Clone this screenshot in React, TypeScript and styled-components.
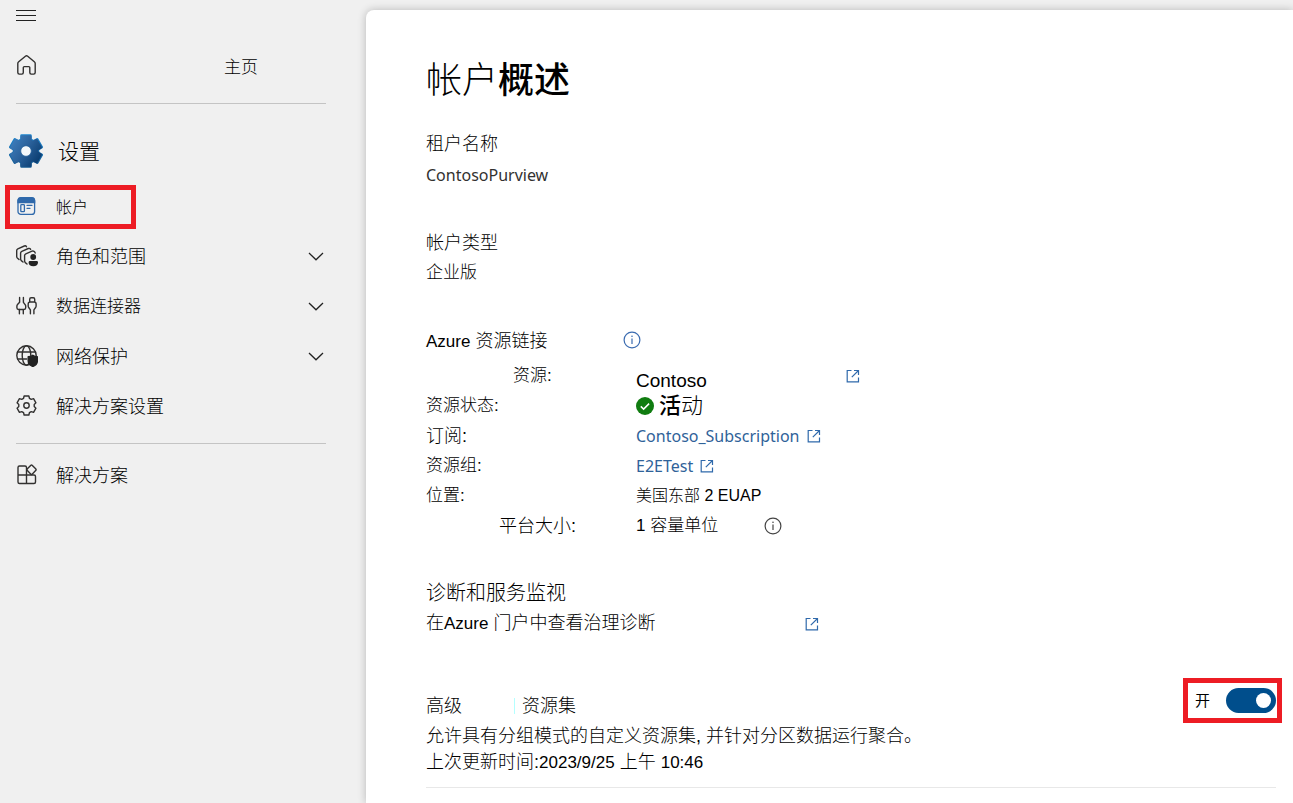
import React from "react";
import styled, { createGlobalStyle } from "styled-components";

const sans = `"Liberation Sans", "Noto Sans CJK SC", sans-serif`;
const humanist = `"Noto Sans", "Noto Sans CJK SC", sans-serif`;

const GlobalStyle = createGlobalStyle`
  * { box-sizing: border-box; }
  body {
    margin: 0;
    background: #f0f0f0;
    color: #000;
    font-family: ${sans};
    font-size: 18px;
    line-height: 30px;
    overflow-x: hidden;
  }
  h1, h2, p, dl, dd, dt, ul { margin: 0; padding: 0; font-weight: 300; }
  svg { display: block; flex: none; }
`;

const Shell = styled.div`
  display: grid;
  grid-template-columns: 366px minmax(0, 1fr);
  min-height: 100vh;
`;

const Sidebar = styled.nav`
  padding: 0 40px 0 16px;
  font-weight: 300;
`;

const MenuButton = styled.button`
  display: flex;
  align-items: center;
  height: 31px;
  padding: 0;
  border: 0;
  background: none;
`;

const HomeLink = styled.a`
  display: flex;
  align-items: flex-start;
  justify-content: space-between;
  height: 72px;
  padding: 23px 68px 0 0;
  color: inherit;
  font-size: 17px;
  line-height: 28px;
  text-decoration: none;
`;

const Rule = styled.hr`
  height: 1px;
  margin: 0;
  border: 0;
  background: #c4c4c4;
`;

const SolutionRule = styled(Rule)`
  margin: 12px 0 6px;
`;

const SideTitle = styled.h2`
  display: flex;
  align-items: center;
  gap: 15px;
  height: 34px;
  margin: 30px 0 17px -7px;
  font-size: 21px;
`;

const NavList = styled.ul`
  list-style: none;
`;

const NavLink = styled.a`
  display: flex;
  align-items: center;
  gap: 18px;
  height: 50px;
  color: inherit;
  font-size: 18px;
  text-decoration: none;
`;

const NavToggle = styled.button<{ $size: number }>`
  display: flex;
  align-items: center;
  gap: 18px;
  width: 100%;
  height: 50px;
  padding: 0 2px 0 0;
  border: 0;
  background: none;
  color: inherit;
  font: inherit;
  font-size: ${(p) => p.$size}px;
  text-align: left;
`;

const NavText = styled.span`
  flex: 1;
  padding-top: 2px;
`;

const Marked = styled(NavLink)`
  width: 131px;
  height: 44px;
  margin: 0 0 2px -11px;
  padding: 0 6px;
  border: 5px solid #ed1c24;
  font-size: 16px;
`;

const Main = styled.main`
  margin-top: 10px;
  padding: 47px 17px 15px 60px;
  border-top-left-radius: 8px;
  background: #fff;
  box-shadow: 0 0 9px rgba(0, 0, 0, 0.24);
`;

const Title = styled.h1`
  font-size: 36px;
  line-height: 48px;
`;

const Strong = styled.span`
  font-weight: 500;
`;

const Section = styled.section<{ $top: number }>`
  margin-top: ${(p) => p.$top}px;
  font-weight: 300;
`;

const Heading = styled.h2<{ $size?: number }>`
  display: flex;
  align-items: center;
  font-size: ${(p) => p.$size ?? 18}px;
`;

const Value = styled.p`
  font-size: 17px;
`;

const TenantName = styled.p`
  color: #323130;
  font-family: ${humanist};
  font-size: 16px;
  font-weight: 400;
  line-height: 32px;
`;

const Note = styled.p`
  line-height: 26px;
`;

const HeadingInfo = styled.span`
  margin-left: 76px;
  padding-bottom: 4px;
`;

const Details = styled.dl`
  display: grid;
  grid-template-columns: 210px minmax(0, 1fr);
  grid-auto-rows: 30px;
  margin-top: 4px;
`;

const Term = styled.dt<{ $indent?: number; $size?: number }>`
  padding-left: ${(p) => p.$indent ?? 0}px;
  font-size: ${(p) => p.$size ?? 17}px;
`;

const Detail = styled.dd<{ $size?: number; $gap?: number }>`
  display: flex;
  align-items: center;
  gap: ${(p) => p.$gap ?? 5}px;
  font-size: ${(p) => p.$size ?? 17}px;
`;

const ResourceName = styled.span`
  width: 210px;
  padding-top: 10px;
`;

const Link = styled.a`
  display: inline-flex;
  align-items: center;
  gap: 7px;
  color: #2f6299;
  font-family: ${humanist};
  font-size: 16px;
  font-weight: 400;
  text-decoration: none;
`;

const PortalLink = styled.a`
  display: flex;
  align-items: center;
  width: 393px;
  justify-content: space-between;
  color: inherit;
  font-size: 18px;
  text-decoration: none;
`;

const Latin = styled.span`
  font-size: 17px;
`;

const Split = styled.div`
  display: flex;
  justify-content: space-between;
  align-items: flex-start;
`;

const Divided = styled.span`
  margin-left: 52px;
  padding-left: 7px;
  border-left: 1px solid #b4ffff;
  line-height: 16px;
`;

const SwitchBox = styled.label`
  display: flex;
  align-items: center;
  justify-content: space-between;
  width: 99px;
  height: 45px;
  margin: -13px -6px 0 0;
  padding: 0 1px 0 7px;
  border: 5px solid #ed1c24;
  font-size: 15px;
  font-weight: 400;
`;

const Switch = styled.input`
  appearance: none;
  display: flex;
  align-items: center;
  justify-content: flex-end;
  width: 50px;
  height: 25px;
  margin: 0;
  padding-right: 5px;
  border-radius: 13px;
  background: #004e8c;
  &::before {
    content: "";
    width: 15px;
    height: 15px;
    border-radius: 50%;
    background: #fff;
  }
`;

const SectionRule = styled(Rule)`
  margin-top: 11px;
  background: #e8e8e8;
`;

/* Outline of a cog: each tooth is a flat top with two steep flanks. */
function cog(c: number, outer: number, inner: number, top: number, base: number) {
  const pts: string[] = [];
  for (let i = 0; i < 6; i++) {
    for (const [off, r] of [[-base, inner], [-top, outer], [top, outer], [base, inner]]) {
      const a = ((i * 60 + off - 90) * Math.PI) / 180;
      pts.push(`${(c + r * Math.cos(a)).toFixed(2)} ${(c + r * Math.sin(a)).toFixed(2)}`);
    }
  }
  return `M${pts.join("L")}Z`;
}

const line = {
  fill: "none",
  stroke: "#323130",
  strokeWidth: 1.4,
  strokeLinecap: "round" as const,
  strokeLinejoin: "round" as const,
};

const MenuIcon = () => (
  <svg width="20" height="12" viewBox="0 0 20 12">
    <path d="M0 .5h20M0 5.5h20M0 10.5h20" stroke="#222" />
  </svg>
);

const HomeIcon = () => (
  <svg width="22" height="22" viewBox="0 0 22 22" {...line}>
    <path d="M9.4 2.2a1.8 1.8 0 0 1 2.3 0l6.6 5.6c.6.5.9 1 .9 1.8v9c0 .9-.6 1.500-1.500 1.500h-2.500c-.9 0-1.400-.6-1.400-1.500v-5c0-.7-.4-1-1-1H8.300c-.6 0-1 .3-1 1v5c0 .9-.6 1.500-1.400 1.500H3.300c-.9 0-1.500-.6-1.500-1.500v-9c0-.8.300-1.300.9-1.800z" />
  </svg>
);

const BlueCog = () => (
  <svg width="34" height="34" viewBox="0 0 34 34">
    <defs>
      <linearGradient id="cogFill" x1="0" y1="0" x2="1" y2="0.7">
        <stop offset="0" stopColor="#3f80c0" />
        <stop offset="0.5" stopColor="#2c639d" />
        <stop offset="1" stopColor="#0c3f73" />
      </linearGradient>
      <linearGradient id="cogEdge" x1="0" y1="0" x2="0" y2="1">
        <stop offset="0" stopColor="#1b85cf" />
        <stop offset="1" stopColor="#155a91" />
      </linearGradient>
    </defs>
    <path d={cog(17, 16.2, 12.2, 16, 22)} fill="url(#cogEdge)" stroke="url(#cogEdge)" strokeWidth="2.600" strokeLinejoin="round" />
    <path d={cog(17, 15, 11.2, 16, 22)} fill="url(#cogFill)" stroke="url(#cogFill)" strokeWidth="2.600" strokeLinejoin="round" />
    <circle cx="17" cy="17" r="5.300" fill="#f4f8fb" stroke="#205c97" strokeWidth=".8" />
  </svg>
);

const AccountIcon = () => (
  <svg width="22" height="22" viewBox="0 0 22 22" fill="none" stroke="#2f69ab" strokeWidth="1.300" strokeLinecap="round">
    <rect x="2" y="1.800" width="16.600" height="16.600" rx="3" />
    <path d="M2 6.500V4.500a3 3 0 0 1 3-2.800h10.600a3 3 0 0 1 3 2.800v2z" fill="#2f69ab" />
    <rect x="4.800" y="8.700" width="3.600" height="7" rx=".8" />
    <path d="M11 9.300h5M11 12.300h3" />
  </svg>
);

const RolesIcon = () => (
  <svg width="22" height="22" viewBox="0 0 22 22" {...line}>
    <path d="M3 14.500 1.300 13a2 2 0 0 1-.6-1.400V5.500c0-.8.4-1.400 1.100-1.700L8.300 1c.8-.3 1.800 0 2.200.8" />
    <path d="m7 17-1.700-1.400a2 2 0 0 1-.7-1.500V8c0-.8.5-1.400 1.200-1.700l6.500-2.800c.9-.3 1.900 0 2.300.9" />
    <path d="m11 19-1.700-1.400a2 2 0 0 1-.7-1.500v-5.600c0-.8.5-1.400 1.200-1.700l6.200-2.600c1.400-.5 3 .2 3.200 1.800" />
    <g fill="#222" stroke="none">
      <circle cx="17.200" cy="12" r="2.900" />
      <path d="M14 16h6.600c.9 0 1.400.6 1.400 1.400 0 2.400-1.700 3.800-4.700 3.800s-4.700-1.400-4.700-3.800c0-.8.5-1.400 1.400-1.400z" />
    </g>
  </svg>
);

const PlugsIcon = () => (
  <svg width="22" height="22" viewBox="0 0 22 22" {...line}>
    <path d="M3.600 2.500v4.800L1.300 9.800c-.3.400-.4.800-.4 1.300v1.700c0 1 .7 1.700 1.700 1.700h.8v4.200M7.400 2.500v4.800l1.900 2.500c.3.400.4.800.4 1.300v1.700c0 1-.7 1.700-1.700 1.700h-.7v4.200M3.500 14.500h3.800" />
    <path d="M14.400 18.700v-3.900l-1.700-2.300c-.4-.5-.5-1-.5-1.600V9c0-1.200.8-2 2-2h3.900c1.200 0 2 .8 2 2v1.900c0 .6-.1 1.100-.5 1.600l-1.700 2.300v3.900M13.700 6.800V4.300c0-1 .5-1.500 1.400-1.500h2.200c.9 0 1.400.5 1.400 1.500v2.500" />
  </svg>
);

const GlobeIcon = () => (
  <svg width="22" height="22" viewBox="0 0 22 22" {...line}>
    <circle cx="10.500" cy="10.500" r="9.700" />
    <ellipse cx="10.500" cy="10.500" rx="4.300" ry="9.700" />
    <path d="M1.700 7h17.600M1.700 14h9" />
    <path d="M16.800 10.200c1.100 1 2.700 1.500 4.600 1.600v4c0 2.600-1.500 4.500-4.600 5.700-3.100-1.200-4.600-3.100-4.600-5.700v-4c1.900-.1 3.500-.6 4.600-1.600z" fill="#222" stroke="#222" />
  </svg>
);

const CogIcon = () => (
  <svg width="22" height="22" viewBox="0 0 22 22" {...line}>
    <path d={cog(10.5, 9.8, 7.8, 14, 22)} />
    <circle cx="10.500" cy="10.500" r="2.700" />
  </svg>
);

const AppsIcon = () => (
  <svg width="22" height="22" viewBox="0 0 22 22" {...line}>
    <path d="M10.500 11V3.500c0-.9-.6-1.500-1.500-1.500H3.500C2.600 2 2 2.600 2 3.500V18c0 .9.600 1.500 1.500 1.500H18c.9 0 1.500-.6 1.500-1.500v-5.500c0-.9-.6-1.500-1.500-1.500H2M10.500 11v8.500" />
    <path d="m14.900 1.200-3.800 3.900a1 1 0 0 0 0 1.200l3.800 3.900c.4.400.8.400 1.200 0L19.900 6.300a1 1 0 0 0 0-1.200l-3.800-3.900c-.4-.4-.8-.4-1.200 0z" />
  </svg>
);

const ChevronIcon = () => (
  <svg width="16" height="9" viewBox="0 0 16 9">
    <path d="m1 1 7 6.800L15 1" fill="none" stroke="#222" strokeWidth="1.300" />
  </svg>
);

const InfoIcon = ({ color }: { color: string }) => (
  <svg width="18" height="18" viewBox="0 0 18 18" fill="none" stroke={color} strokeWidth="1.200">
    <circle cx="9" cy="9" r="7.900" />
    <path d="M9 7.500v5.500" />
    <circle cx="9" cy="5.300" r=".8" fill={color} stroke="none" />
  </svg>
);

const OpenIcon = () => (
  <svg width="14" height="14" viewBox="0 0 14 14" fill="none" stroke="#2f69ab" strokeWidth="1.200">
    <path d="M5.500 1.500H1.200v11.300h11.300V8.500M8 1.500h4.500V6M12.500 1.500 5.800 8.200" />
  </svg>
);

const CheckIcon = () => (
  <svg width="18" height="18" viewBox="0 0 18 18">
    <circle cx="9" cy="9" r="9" fill="#107c10" />
    <path d="m4.800 9.400 2.800 2.700 5.500-5.500" fill="none" stroke="#fff" strokeWidth="1.500" />
  </svg>
);

const groups = [
  { text: "角色和范围", size: 18, icon: <RolesIcon /> },
  { text: "数据连接器", size: 17, icon: <PlugsIcon /> },
  { text: "网络保护", size: 18, icon: <GlobeIcon /> },
];

export default function App() {
  return (
    <>
      <GlobalStyle />
      <Shell>
        <Sidebar>
          <MenuButton aria-label="菜单"><MenuIcon /></MenuButton>
          <HomeLink href="#home"><HomeIcon /><span>主页</span></HomeLink>
          <Rule />
          <SideTitle><BlueCog /><NavText>设置</NavText></SideTitle>
          <NavList>
            <li><Marked href="#account"><AccountIcon /><NavText>帐户</NavText></Marked></li>
            {groups.map((g) => (
              <li key={g.text}>
                <NavToggle $size={g.size} aria-expanded={false}>
                  {g.icon}
                  <NavText>{g.text}</NavText>
                  <ChevronIcon />
                </NavToggle>
              </li>
            ))}
            <li><NavLink href="#solution-settings"><CogIcon /><NavText>解决方案设置</NavText></NavLink></li>
          </NavList>
          <SolutionRule />
          <NavLink href="#solutions"><AppsIcon /><NavText>解决方案</NavText></NavLink>
        </Sidebar>

        <Main>
          <Title>帐户<Strong>概述</Strong></Title>

          <Section $top={24}>
            <Heading>租户名称</Heading>
            <TenantName>ContosoPurview</TenantName>
          </Section>

          <Section $top={37}>
            <Heading>帐户类型</Heading>
            <Value>企业版</Value>
          </Section>

          <Section $top={38}>
            <Heading>
              <span><Latin>Azure</Latin> 资源链接</span>
              <HeadingInfo><InfoIcon color="#3a6bb0" /></HeadingInfo>
            </Heading>
            <Details>
              <Term $indent={87}>资源:</Term>
              <Detail $size={19} $gap={0}>
                <ResourceName>Contoso</ResourceName>
                <OpenIcon />
              </Detail>
              <Term>资源状态:</Term>
              <Detail $size={22}><CheckIcon /><span><Strong>活</Strong>动</span></Detail>
              <Term $size={18}>订阅:</Term>
              <Detail><Link href="#subscription">Contoso_Subscription<OpenIcon /></Link></Detail>
              <Term>资源组:</Term>
              <Detail><Link href="#group">E2ETest<OpenIcon /></Link></Detail>
              <Term>位置:</Term>
              <Detail $size={16}>美国东部 2 EUAP</Detail>
              <Term $indent={73} $size={18}>平台大小:</Term>
              <Detail $gap={46}>1 容量单位<InfoIcon color="#444" /></Detail>
            </Details>
          </Section>

          <Section $top={37}>
            <Heading $size={20}>诊断和服务监视</Heading>
            <PortalLink href="#diagnostics">
              <span>在<Latin>Azure</Latin> 门户中查看治理诊断</span>
              <OpenIcon />
            </PortalLink>
          </Section>

          <Section $top={52}>
            <Split>
              <Heading>高级<Divided>资源集</Divided></Heading>
              <SwitchBox>
                开
                <Switch type="checkbox" role="switch" defaultChecked />
              </SwitchBox>
            </Split>
            <Note>允许具有分组模式的自定义资源集, 并针对分区数据运行聚合。</Note>
            <Note>上次更新时间:<Latin>2023/9/25</Latin> 上午 <Latin>10:46</Latin></Note>
            <SectionRule />
          </Section>
        </Main>
      </Shell>
    </>
  );
}
